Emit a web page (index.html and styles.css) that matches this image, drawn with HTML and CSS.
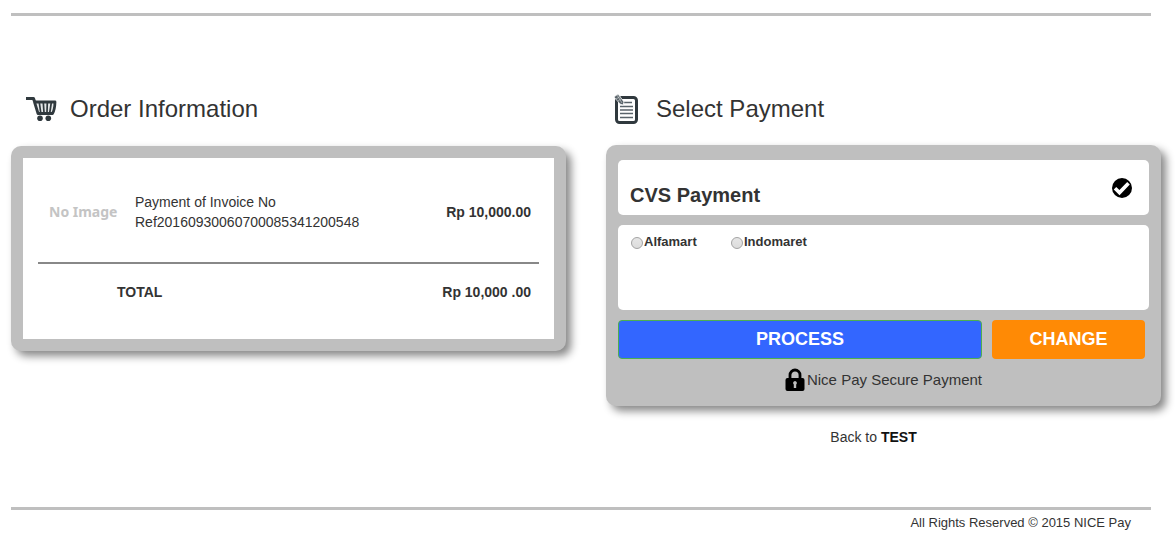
FILE: index.html
```html
<!DOCTYPE html>
<html lang="en">
<head>
<meta charset="utf-8">
<title>NICE Pay</title>
<link rel="stylesheet" href="styles.css">
</head>
<body>
<header class="top"></header>
<main class="columns">
  <section class="order">
    <h1 class="heading">
      <svg class="icon-cart" width="32" height="26" viewBox="0 0 32 26" aria-hidden="true">
        <path d="M1 2.500h7.500l1 3" fill="none" stroke="#30393e" stroke-width="3" stroke-linejoin="round"/>
        <path d="M9.500 6h20.500q-.3 8-2.500 11.500H13z" fill="#e4e7e8" stroke="#30393e" stroke-width="2.800" stroke-linejoin="round"/>
        <path d="M14.300 6.500l1.400 10M18.300 6.500l.7 10M22.300 6.500l-.3 10M26.300 6.500l-1.500 10" stroke="#30393e" stroke-width="1.700"/>
        <circle cx="15" cy="22.300" r="2.800" fill="#30393e"/>
        <circle cx="23.300" cy="22.300" r="2.800" fill="#30393e"/>
      </svg>
      <span>Order Information</span>
    </h1>
    <div class="panel panel-order">
      <table class="items">
        <tbody>
          <tr>
            <td class="thumb"><span class="no-image">No Image</span></td>
            <td class="desc">Payment of Invoice No<br>Ref20160930060700085341200548</td>
            <td class="price">Rp 10,000.00</td>
          </tr>
        </tbody>
        <tfoot>
          <tr>
            <th class="total" colspan="2" scope="row">TOTAL</th>
            <td class="price">Rp 10,000 .00</td>
          </tr>
        </tfoot>
      </table>
    </div>
  </section>
  <section class="payment">
    <h1 class="heading heading-pay">
      <svg class="icon-note" width="26" height="32" viewBox="0 0 26 32" aria-hidden="true">
        <rect x="2.500" y="4.500" width="20" height="25" rx="3" fill="#fff" stroke="#30393e" stroke-width="3"/>
        <path d="M10 9.500h8M6 13.500h13M6 17h13M6 20.500h13M6 24.500h13" stroke="#59636a" stroke-width="1.500"/>
        <path d="M0 4l4-3 6 8-1 3-3-1z" fill="#59636a" stroke="#fff" stroke-width=".7"/>
        <path d="M2 6l5-3M4 8l4-3M3 2l5 8" stroke="#d5d8d9" stroke-width=".6"/>
      </svg>
      <span>Select Payment</span>
    </h1>
    <form class="panel panel-pay">
      <div class="card method">
        <h2 class="method-name">CVS Payment</h2>
        <svg class="icon-check" width="20" height="20" viewBox="0 0 20 20" aria-hidden="true">
          <circle cx="10" cy="10" r="10" fill="#000"/>
          <path d="M3 10.300l4.500 4.300 9-9.300" fill="none" stroke="#fff" stroke-width="3.600"/>
        </svg>
      </div>
      <div class="card stores">
        <label class="store"><input class="radio" type="radio" name="store" value="alfamart">Alfamart</label>
        <label class="store"><input class="radio" type="radio" name="store" value="indomaret">Indomaret</label>
      </div>
      <div class="actions">
        <button class="btn btn-process" type="button">PROCESS</button>
        <button class="btn btn-change" type="button">CHANGE</button>
      </div>
      <p class="secure">
        <svg width="20" height="24" viewBox="0 0 20 24" aria-hidden="true">
          <path d="M5 12V7a5 5 0 0 1 10 0v5" fill="none" stroke="#000" stroke-width="2.800"/>
          <rect x="0.500" y="10" width="19" height="13" rx="2" fill="#000"/>
          <path d="M10 13a2 2 0 0 1 1.200 3.500V20H8.800v-3.500A2 2 0 0 1 10 13z" fill="#bfbfbf"/>
        </svg>
        <span>Nice Pay Secure Payment</span>
      </p>
    </form>
    <p class="back">Back to <a class="back-link" href="#">TEST</a></p>
  </section>
</main>
<footer class="footer">All Rights Reserved © 2015 NICE Pay</footer>
</body>
</html>
```
FILE: styles.css
```css
* {
  box-sizing: border-box;
}

body {
  margin: 0;
  padding: 13px 14px 0 11px;
  background: #fff;
  color: #333;
  font-family: "Liberation Sans", Arial, sans-serif;
  font-size: 14px;
  line-height: 20px;
}

.top,
.footer {
  margin-right: 10px;
  border-top: 3px solid #bfbfbf;
}

.columns {
  display: grid;
  grid-template-columns: 1fr 1fr;
  gap: 40px;
  padding-top: 73px;
}

.heading {
  display: flex;
  align-items: center;
  gap: 13px;
  height: 40px;
  margin: 0 0 17px;
  padding-left: 14px;
  font-size: 24px;
  font-weight: 400;
}

.heading-pay {
  gap: 16px;
  margin-bottom: 16px;
  padding-left: 8px;
}

.icon-cart,
.icon-note {
  flex: none;
}

.panel {
  background: #bfbfbf;
  border-radius: 10px;
  box-shadow: 5px 5px 8px #888;
}

.panel-order {
  padding: 12px;
}

.items {
  width: 100%;
  border: solid #fff;
  border-width: 4px 15px 19px;
  border-spacing: 0;
  background: #fff;
}

.items td,
.items th {
  padding: 0;
}

.items tbody td {
  height: 102px;
  border-bottom: 2px solid #888;
}

.items tfoot td,
.items tfoot th {
  height: 56px;
}

.items .thumb {
  width: 97px;
  padding-left: 11px;
}

.no-image {
  color: #c4c4c4;
  font-family: "Noto Sans", sans-serif;
  font-weight: 700;
}

.items .price {
  padding-right: 8px;
  font-weight: 700;
  text-align: right;
}

.items .total {
  padding-left: 79px;
  text-align: left;
}

.panel-pay {
  padding: 15px 12px 14px;
}

.card {
  display: flex;
  margin-bottom: 10px;
  padding: 0 12px;
  border-radius: 5px;
  background: #fff;
}

.method {
  align-items: center;
  justify-content: space-between;
  height: 55px;
  padding-right: 17px;
}

.method-name {
  margin: 14px 0 0;
  font-size: 20px;
}

.stores {
  height: 85px;
  padding-top: 7px;
}

.store {
  display: flex;
  align-items: center;
  width: 100px;
  height: 20px;
  font-size: 13px;
  font-weight: 700;
}

.radio {
  flex: none;
  appearance: none;
  width: 12px;
  height: 12px;
  margin: 2px 1px 0;
  border: 1px solid #a3a3a3;
  border-radius: 50%;
  background: linear-gradient(#e6e6e6, #dcdcdc);
}

.radio:checked {
  background: radial-gradient(#444 35%, #e2e2e2 40%);
}

.actions {
  display: grid;
  grid-template-columns: 364fr 153fr;
  gap: 10px;
  padding-right: 4px;
}

.btn {
  height: 39px;
  padding: 0 0 2px;
  border: 0;
  border-radius: 4px;
  color: #fff;
  font: 700 18px/20px "Liberation Sans", Arial, sans-serif;
}

.btn-process {
  border: 1px solid #4caf50;
  background: #36f;
}

.btn-change {
  background: #ff8a05;
}

.secure {
  display: flex;
  align-items: center;
  justify-content: center;
  gap: 2px;
  margin: 9px 0 0;
  font-size: 15px;
}

.back {
  margin: 21px 20px 0 0;
  text-align: center;
}

.back-link {
  color: #111;
  font-weight: 700;
  text-decoration: none;
}

.footer {
  margin-top: 60px;
  padding: 3px 20px 0 0;
  font-size: 13px;
  text-align: right;
}
```
